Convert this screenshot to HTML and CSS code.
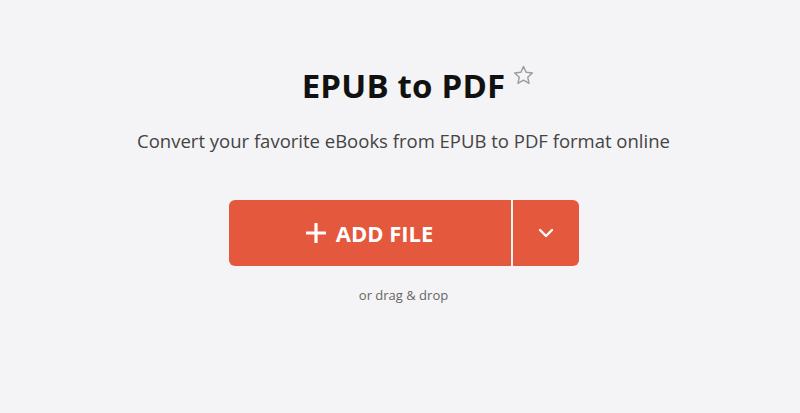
FILE: index.html
```html
<!DOCTYPE html>
<html>
<head>
<meta charset="utf-8">
<link rel="stylesheet" href="styles.css">
</head>
<body>
<main class="hero">
  <div class="title-row">
    <h1 class="title">EPUB to PDF</h1>
    <svg class="star" viewBox="0 0 24 24" width="23" height="23"><path d="M12 2.6l2.75 5.95 6.5.75-4.85 4.45 1.4 6.4L12 16.95l-5.8 3.2 1.4-6.4-4.85-4.45 6.5-.75z" fill="none" stroke="#9c9c9c" stroke-width="1.5" stroke-linejoin="round"/></svg>
  </div>
  <p class="subtitle">Convert your favorite eBooks from EPUB to PDF format online</p>
  <div class="btn-group">
    <button class="btn-main">
      <svg class="plus" viewBox="0 0 20 20" width="20" height="20"><path d="M10 1v18M1 10h18" stroke="#fff" stroke-width="3.2" stroke-linecap="round"/></svg>
      <span>ADD FILE</span>
    </button>
    <button class="btn-drop">
      <svg viewBox="0 0 16 10" width="16" height="10"><path d="M2 2l6 6 6-6" fill="none" stroke="#fff" stroke-width="2.4" stroke-linecap="round" stroke-linejoin="round"/></svg>
    </button>
  </div>
  <p class="hint">or drag &amp; drop</p>
</main>
</body>
</html>
```
FILE: styles.css
```css
html, body {
  margin: 0;
  padding: 0;
  background: #f4f3f5;
  font-family: "Open Sans", "Noto Sans", sans-serif;
}
.hero {
  display: flex;
  flex-direction: column;
  align-items: center;
  padding-top: 63px;
  padding-left: 7px;
}
.title-row {
  position: relative;
  display: flex;
  align-items: flex-start;
}
.title {
  margin: 0;
  font-size: 33px;
  font-weight: 700;
  color: #111;
  line-height: 45px;
  letter-spacing: 0.2px;
}
.star {
  position: absolute;
  left: calc(100% + 7px);
  top: 1px;
}
.subtitle {
  margin: 21px 0 0;
  font-size: 18.5px;
  color: #444;
  line-height: 24px;
}
.btn-group {
  display: flex;
  margin-top: 47px;
  height: 66px;
  border-radius: 6px;
  overflow: hidden;
}
.btn-main, .btn-drop {
  border: none;
  background: #e4583e;
  color: #fff;
  display: flex;
  align-items: center;
  justify-content: center;
  cursor: pointer;
  font-family: inherit;
}
.btn-main {
  width: 282px;
  gap: 10px;
  font-size: 22px;
  font-weight: 700;
  padding: 0;
}
.btn-drop {
  width: 66px;
  margin-left: 2px;
  padding: 0;
}
.hint {
  margin: 20px 0 0;
  font-size: 13px;
  color: #666;
}
```
